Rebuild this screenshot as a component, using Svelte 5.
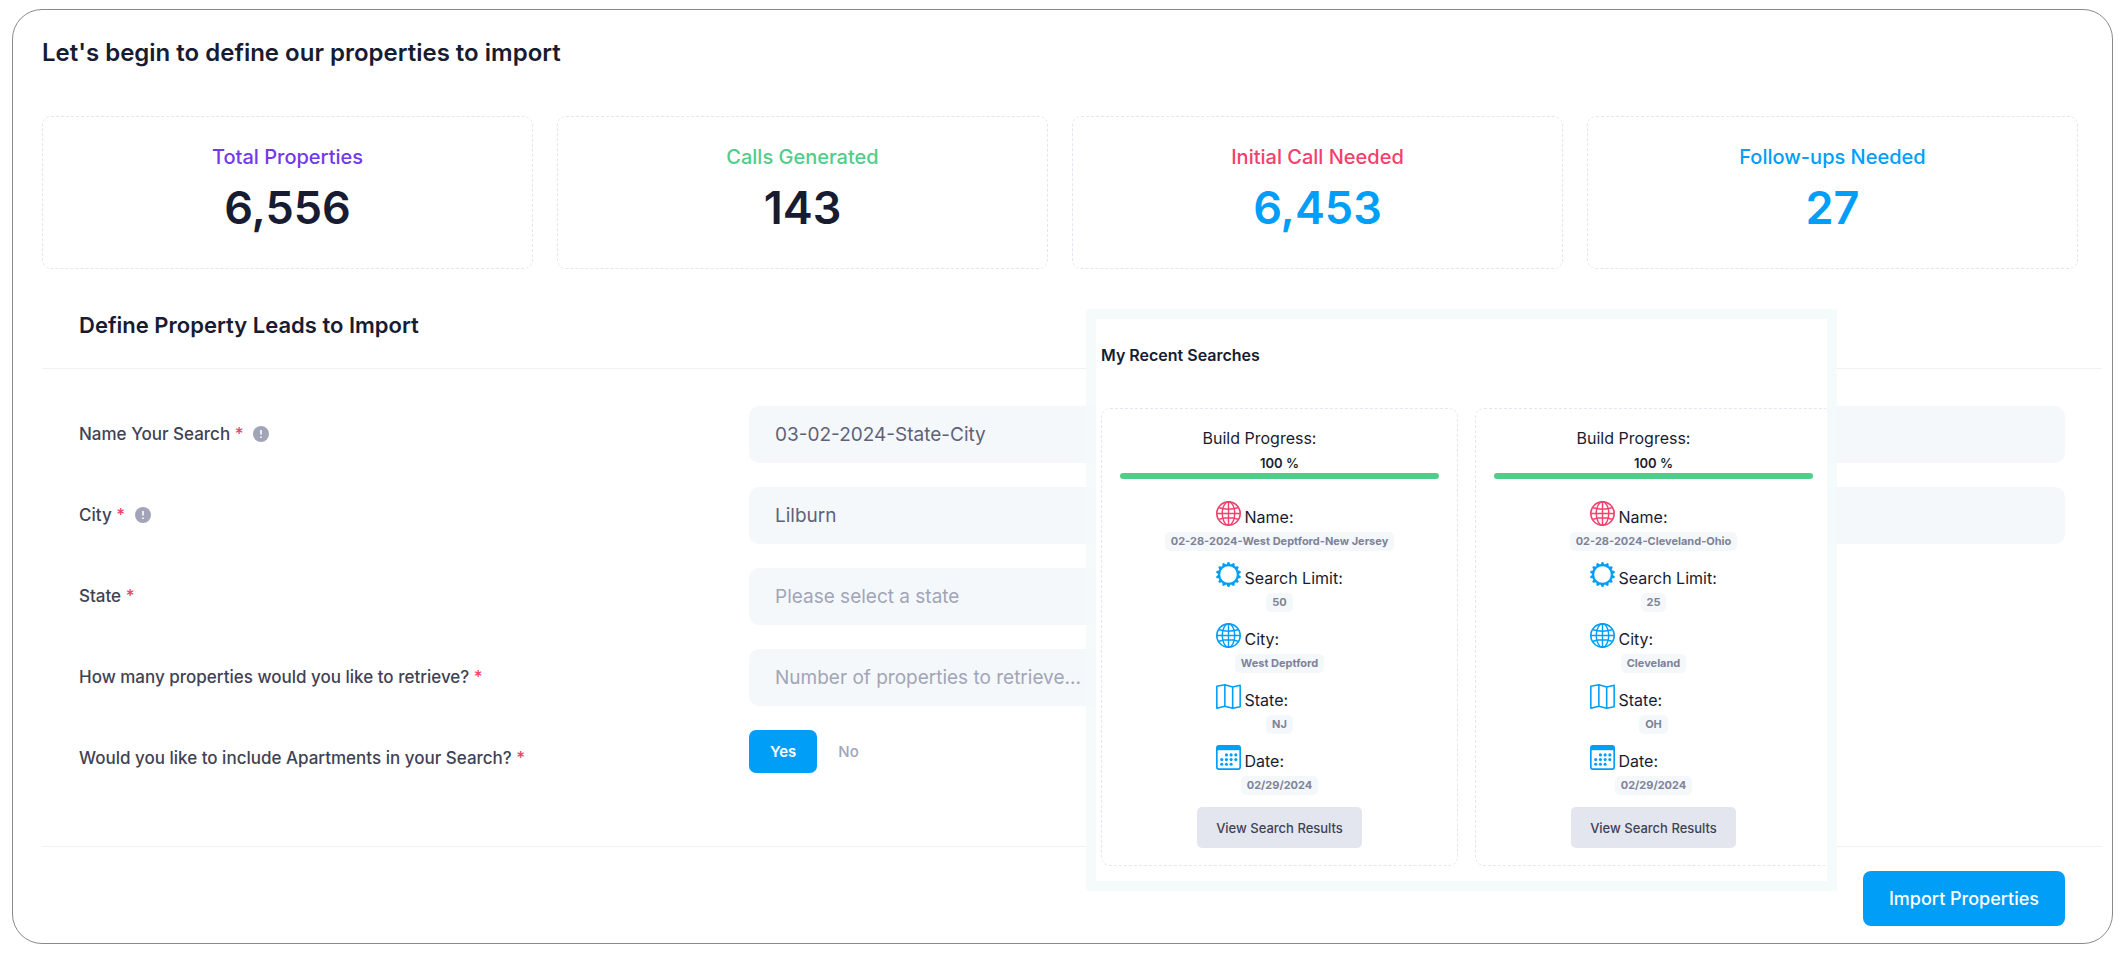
<script>
  import { writable } from 'svelte/store';

  const searchName = writable('03-02-2024-State-City');
  const city = writable('Lilburn');
  const state = writable('');
  const limit = writable('');
  const apartments = writable('yes');

  const states = ['Georgia', 'New Jersey', 'Ohio'];

  const stats = [
    { label: 'Total Properties', value: '6,556', tone: 'purple', valueTone: 'dark' },
    { label: 'Calls Generated', value: '143', tone: 'green', valueTone: 'dark' },
    { label: 'Initial Call Needed', value: '6,453', tone: 'red', valueTone: 'blue' },
    { label: 'Follow-ups Needed', value: '27', tone: 'blue', valueTone: 'blue' }
  ];

  const searches = [
    {
      progress: 100,
      rows: [
        { icon: 'globe', tone: 'red', label: 'Name:', value: '02-28-2024-West Deptford-New Jersey' },
        { icon: 'gear', tone: 'blue', label: 'Search Limit:', value: '50' },
        { icon: 'globe', tone: 'blue', label: 'City:', value: 'West Deptford' },
        { icon: 'map', tone: 'blue', label: 'State:', value: 'NJ' },
        { icon: 'calendar', tone: 'blue', label: 'Date:', value: '02/29/2024' }
      ]
    },
    {
      progress: 100,
      rows: [
        { icon: 'globe', tone: 'red', label: 'Name:', value: '02-28-2024-Cleveland-Ohio' },
        { icon: 'gear', tone: 'blue', label: 'Search Limit:', value: '25' },
        { icon: 'globe', tone: 'blue', label: 'City:', value: 'Cleveland' },
        { icon: 'map', tone: 'blue', label: 'State:', value: 'OH' },
        { icon: 'calendar', tone: 'blue', label: 'Date:', value: '02/29/2024' }
      ]
    }
  ];

  const teeth = Array.from({ length: 14 }, (_, i) => (i * 360) / 14);
  const days = [
    [10, 9.5], [14.5, 9.5], [19, 9.5],
    [5.5, 14], [10, 14], [14.5, 14], [19, 14],
    [5.5, 18.5], [10, 18.5], [14.5, 18.5]
  ];
</script>

<main>
  <h1>Let's begin to define our properties to import</h1>

  <div class="stats">
    {#each stats as stat}
      <div class="stat">
        <div class="stat-label {stat.tone}">{stat.label}</div>
        <div class="stat-value {stat.valueTone}">{stat.value}</div>
      </div>
    {/each}
  </div>

  <form class="panel" on:submit|preventDefault>
    <div class="panel-header">
      <h2>Define Property Leads to Import</h2>
    </div>

    <div class="panel-body">
      <div class="row">
        <label class="label" for="search-name">
          Name Your Search <span class="required">*</span>
          <svg class="info" viewBox="0 0 16 16">
            <circle cx="8" cy="8" r="8" fill="#a1a5b7" />
            <path d="M8 4v4.6M8 10.6v1.5" stroke="#fff" stroke-width="1.6" />
          </svg>
        </label>
        <input id="search-name" type="text" class="field" bind:value={$searchName} />
      </div>
      <div class="row">
        <label class="label" for="city">
          City <span class="required">*</span>
          <svg class="info" viewBox="0 0 16 16">
            <circle cx="8" cy="8" r="8" fill="#a1a5b7" />
            <path d="M8 4v4.6M8 10.6v1.5" stroke="#fff" stroke-width="1.6" />
          </svg>
        </label>
        <input id="city" type="text" class="field" bind:value={$city} />
      </div>
      <div class="row">
        <label class="label" for="state">State <span class="required">*</span></label>
        <select id="state" class="field half" class:empty={!$state} bind:value={$state}>
          <option value="">Please select a state</option>
          {#each states as name}
            <option value={name}>{name}</option>
          {/each}
        </select>
      </div>
      <div class="row">
        <label class="label" for="limit">
          How many properties would you like to retrieve? <span class="required">*</span>
        </label>
        <input
          id="limit"
          type="text"
          class="field half"
          placeholder="Number of properties to retrieve..."
          bind:value={$limit}
        />
      </div>
      <div class="row" role="radiogroup" aria-labelledby="apartments-label">
        <div class="label" id="apartments-label">
          Would you like to include Apartments in your Search? <span class="required">*</span>
        </div>
        <div class="choices">
          <label class="choice">
            <input type="radio" name="apartments" value="yes" bind:group={$apartments} />
            <span>Yes</span>
          </label>
          <label class="choice">
            <input type="radio" name="apartments" value="no" bind:group={$apartments} />
            <span>No</span>
          </label>
        </div>
      </div>
    </div>

    <div class="panel-footer">
      <button type="submit" class="import-button">Import Properties</button>
    </div>
  </form>

  <section class="recent">
    <h3>My Recent Searches</h3>
    <div class="searches">
      {#each searches as search}
        <div class="search-card">
          <div class="progress-title">Build Progress:</div>
          <div class="progress-value">{search.progress} %</div>
          <div class="progress">
            <div class="progress-bar" style="width: {search.progress}%"></div>
          </div>

          <div class="details">
            {#each search.rows as row}
              <div class="detail">
                <div class="detail-label">
                  <svg class={row.tone} viewBox="0 0 24 24" fill="none" stroke="currentColor">
                    {#if row.icon === 'globe'}
                      <circle cx="12" cy="12" r="11.2" stroke-width="1.6" />
                      <ellipse cx="12" cy="12" rx="6" ry="11.2" stroke-width="1.4" />
                      <path d="M12 1v22M1 12h22M3 6.5c5 1.5 13 1.5 18 0M3 17.5c5-1.5 13-1.5 18 0" stroke-width="1.4" />
                    {:else if row.icon === 'gear'}
                      <circle cx="12" cy="12" r="9" stroke-width="2" />
                      {#each teeth as angle}
                        <path d="M9.8 3L11.3 0h1.4L14.2 3z" fill="currentColor" stroke="none" transform="rotate({angle} 12 12)" />
                      {/each}
                    {:else if row.icon === 'map'}
                      <path d="M.8 2.2L8.5.8l7.500 2 7.200-1.600v20.600L16 23.200l-7.500-1.800-7.700 1.800zM8.500.8v20.600M16 2.800v20.400" stroke-width="1.5" stroke-linejoin="round" />
                    {:else}
                      <rect x=".8" y=".8" width="22.4" height="22.4" rx="2" stroke-width="1.6" />
                      <path d="M1 1h22v4H1z" fill="currentColor" stroke="none" />
                      {#each days as [x, y]}
                        <circle cx={x} cy={y} r="1.5" fill="currentColor" stroke="none" />
                      {/each}
                    {/if}
                  </svg>
                  <span>{row.label}</span>
                </div>
                <span class="badge">{row.value}</span>
              </div>
            {/each}
          </div>

          <button type="button" class="view-button">View Search Results</button>
        </div>
      {/each}
    </div>
  </section>
</main>

<style>
  :global(body) {
    background: #fff;
    font-family: Inter, 'Liberation Sans', sans-serif;
  }

  main {
    position: relative;
    margin: 9px 14px 12px 12px;
    padding: 28px 10px 17px 29px;
    border: 1px solid #8a8a8a;
    border-radius: 30px;
    color: #181c32;
  }

  h1,
  h2,
  h3 {
    margin: 0;
    font-weight: 600;
  }

  h1 {
    margin-bottom: 49px;
    font-size: 24px;
    line-height: 29px;
  }

  .stats {
    display: grid;
    grid-template-columns: repeat(4, 1fr);
    gap: 24px;
    margin-right: 24px;
  }

  .stat {
    padding: 25px 20px 33px;
    border: 1px dashed #e4e6ef;
    border-radius: 9px;
    text-align: center;
  }

  .stat-label {
    margin-bottom: 9px;
    font-size: 20px;
    font-weight: 500;
    line-height: 30px;
  }

  .stat-value {
    font-size: 45px;
    font-weight: 600;
    line-height: 54px;
  }

  .purple { color: #7239ea; }
  .green { color: #50cd89; }
  .red { color: #f1416c; }
  .blue { color: #009ef7; }
  .dark { color: #181c32; }

  .panel {
    margin-top: 12px;
  }

  .panel-header {
    display: flex;
    align-items: center;
    height: 87px;
    padding: 0 37px;
    border-bottom: 1px solid #eff2f5;
  }

  h2 {
    font-size: 22px;
  }

  .panel-body {
    display: flex;
    flex-direction: column;
    gap: 24px;
    padding: 37px 37px 59px;
  }

  .row {
    display: grid;
    grid-template-columns: 1fr 2fr;
    column-gap: 12px;
    align-items: center;
    min-height: 57px;
    color: #3f4254;
  }

  .label {
    padding-bottom: 2px;
    font-size: 17px;
    font-weight: 500;
  }

  .required {
    color: #f1416c;
  }

  .info {
    width: 16px;
    height: 16px;
    margin-left: 5px;
    vertical-align: -2px;
  }

  .field {
    box-sizing: border-box;
    width: 100%;
    height: 57px;
    padding: 0 26px;
    border: none;
    border-radius: 10px;
    outline: none;
    background: #f5f8fa;
    color: #5e6278;
    font-family: inherit;
    font-size: 19px;
    appearance: none;
  }

  .half {
    width: 50%;
  }

  .empty,
  .field::placeholder {
    color: #a1a5b7;
    opacity: 1;
  }

  .choices {
    display: flex;
    align-self: start;
  }

  .choice input {
    position: absolute;
    opacity: 0;
  }

  .choice span {
    display: block;
    padding: 0 21px;
    border-radius: 7px;
    color: #a1a5b7;
    font-size: 15px;
    font-weight: 500;
    line-height: 43px;
    cursor: pointer;
  }

  .choice input:checked + span {
    background: #009ef7;
    color: #fff;
    font-weight: 600;
  }

  .panel-footer {
    display: flex;
    justify-content: flex-end;
    padding: 24px 37px 0;
    border-top: 1px solid #eff2f5;
  }

  button {
    border: none;
    font-family: inherit;
    font-weight: 500;
    cursor: pointer;
  }

  .import-button {
    height: 55px;
    padding: 0 26px;
    border-radius: 8px;
    background: #009ef7;
    color: #fff;
    font-size: 18px;
  }

  .recent {
    position: absolute;
    top: 299px;
    right: 275px;
    box-sizing: border-box;
    width: 751px;
    padding: 24px 0 15px 5px;
    border: 10px solid rgba(244, 249, 251, 0.9);
    background: #fff;
    background-clip: padding-box;
    overflow: hidden;
  }

  h3 {
    margin-bottom: 41px;
    font-size: 16px;
    line-height: 24px;
  }

  .searches {
    display: flex;
    gap: 17px;
  }

  .search-card {
    display: flex;
    flex: 0 0 357px;
    flex-direction: column;
    align-items: center;
    box-sizing: border-box;
    padding: 17px 18px;
    border: 1px dashed #e4e6ef;
    border-radius: 9px;
  }

  .progress-title {
    margin: 0 40px 5px 0;
    font-size: 16px;
    line-height: 24px;
  }

  .progress-value {
    margin-bottom: 2px;
    font-size: 13px;
    font-weight: 600;
    line-height: 16px;
  }

  .progress {
    width: 100%;
    height: 6px;
    margin-bottom: 22px;
  }

  .progress-bar {
    height: 100%;
    border-radius: 3px;
    background: #50cd89;
  }

  .details {
    display: flex;
    flex-direction: column;
    align-items: center;
    gap: 11px;
    margin-bottom: 12px;
  }

  .detail {
    display: flex;
    flex-direction: column;
    align-items: center;
    gap: 3px;
  }

  .detail-label {
    display: flex;
    align-items: flex-end;
    gap: 4px;
    width: 128px;
    height: 28px;
    font-size: 16px;
    line-height: 24px;
    white-space: nowrap;
  }

  .detail-label svg {
    width: 25px;
    height: 25px;
    align-self: flex-start;
  }

  .badge {
    padding: 0 6px;
    border-radius: 5px;
    background: #f5f8fa;
    color: #7e8299;
    font-size: 11px;
    font-weight: 700;
    line-height: 19px;
  }

  .view-button {
    height: 41px;
    padding: 0 19px;
    border-radius: 5px;
    background: #e4e6ef;
    color: #3f4254;
    font-size: 13px;
  }
</style>
